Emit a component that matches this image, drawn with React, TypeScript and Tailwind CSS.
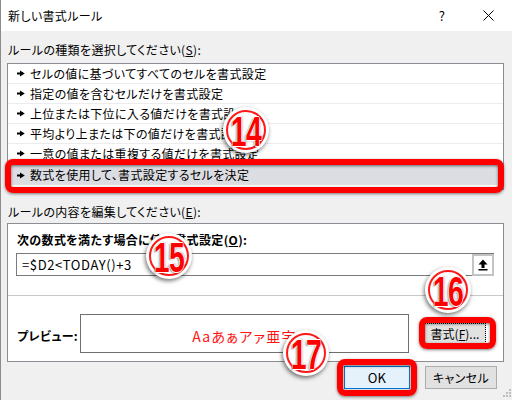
import React from "react";

const JP = { fontFamily: '"Noto Sans CJK JP", "Noto Sans", sans-serif', fontFeatureSettings: '"palt"' } as React.CSSProperties;

function Arrow() {
  return (
    <svg width="8" height="7" viewBox="0 0 8 7" className="shrink-0">
      <polygon points="0,2.6 3,2.6 3,0.5 7.8,3.5 3,6.5 3,4.4 0,4.4" fill="#000" />
    </svg>
  );
}

function Badge({ n, x, y }: { n: string; x: number; y: number }) {
  return (
    <div
      className="absolute w-[46px] h-[46px] rounded-full bg-white shadow-[-1px_2px_4px_rgba(0,0,0,0.55)] flex items-center justify-center"
      style={{ left: x - 23, top: y - 23 }}
    >
      <div className="w-[40px] h-[40px] rounded-full border-2 border-[#ff1a1a] flex items-center justify-center">
        <span
          className="block text-[43px] leading-[36px] font-bold text-[#ff0000] scale-x-[0.66] tracking-[-1px] mt-[2px]"
          style={{
            fontFamily: '"Liberation Sans", Arial, sans-serif',
            textShadow:
              "1px 0 0 #fff, -1px 0 0 #fff, 0 1px 0 #fff, 0 -1px 0 #fff, -2px 1px 2px rgba(0,0,0,0.45), 2px -1px 2px rgba(0,0,0,0.25)",
          }}
        >
          {n}
        </span>
      </div>
    </div>
  );
}

export default function App() {
  const rows = [
    "セルの値に基づいてすべてのセルを書式設定",
    "指定の値を含むセルだけを書式設定",
    "上位または下位に入る値だけを書式設定",
    "平均より上または下の値だけを書式設定",
    "一意の値または重複する値だけを書式設定",
    "数式を使用して、書式設定するセルを決定",
  ];
  return (
    <div
      className="relative w-[512px] h-[400px] overflow-hidden bg-[#f0f0f0] border-l border-[#8c8c8c] text-black text-[12px] leading-[16px] tracking-[0.35px]"
      style={JP}
    >
      {/* title bar */}
      <div className="h-[31px] bg-white flex items-center pl-[7px]">
        <span className="flex-1">新しい書式ルール</span>
        <span className="w-[8px] text-center text-[13px]">?</span>
        <svg width="11" height="11" viewBox="0 0 11 11" className="ml-[37px] mr-[18px]">
          <path d="M0.5 0.5 L10.5 10.5 M10.5 0.5 L0.5 10.5" stroke="#000" strokeWidth="1" />
        </svg>
      </div>

      <div className="pl-[6px]">
        <div className="mt-[11px] pl-[1px]">
          ルールの種類を選択してください(<span className="underline">S</span>):
        </div>
        <div className="mt-[5px] w-[497px] h-[127px] bg-white border border-[#8a8d94] pt-0">
          {rows.map((r, i) => (
            <div
              key={i}
              className={
                "h-[20px] flex items-center gap-[5px] pl-[9px] " +
                (i === 5 ? "bg-[#dcdde2] mt-[1px]" : "border-b border-[#ececec]")
              }
            >
              <Arrow />
              <span>{r}</span>
            </div>
          ))}
        </div>

        <div className="mt-[14px] pl-[1px]">
          ルールの内容を編集してください(<span className="underline">E</span>):
        </div>
        <div className="mt-[3px] w-[497px] h-[139px] bg-white border border-[#8a8d94]">
          <div className="pt-[8px] pl-[9px] font-bold">
            次の数式を満たす場合に値を書式設定(<span className="underline">O</span>):
          </div>
          <div className="mt-[5px] ml-[8px] w-[478px] h-[23px] border border-[#7a7a7a] flex items-center">
            <span
              className="flex-1 pl-[5px] text-[13px] tracking-[0.6px]"
              style={{ fontFamily: '"Noto Sans CJK JP", sans-serif' }}
            >
              =$D2&lt;TODAY()+3
            </span>
            <div className="w-[22px] h-[22px] border-2 border-[#c3c3c3] bg-white flex items-center justify-center -mr-[1px]">
              <svg width="10" height="12" viewBox="0 0 10 12">
                <polygon points="5,0.5 9.5,5.5 6.5,5.5 6.5,9 3.5,9 3.5,5.5 0.5,5.5" fill="#000" />
                <rect x="0.5" y="10" width="9" height="1.5" fill="#000" />
              </svg>
            </div>
          </div>
          <div className="mt-[19px] h-px bg-[#c8c8c8]" />
          <div className="mt-[18px] flex items-center">
            <span className="pl-[9px] w-[72px] font-bold pt-[4px]">プレビュー:</span>
            <div className="w-[329px] h-[39px] border border-[#6f6f6f] flex items-center justify-center">
              <span
                className="text-[14px] text-[#ff1414] tracking-[1.3px] pt-[4px]"
                style={{ fontFamily: '"Noto Sans CJK JP", sans-serif' }}
              >
                Aaあぁアァ亜宇
              </span>
            </div>
            <div className="ml-[15px] w-[62px] h-[21px] bg-[#e1e1e1] border border-dotted border-black flex items-center justify-center tracking-normal">
              書式(<span className="underline">F</span>)...
            </div>
          </div>
        </div>

        <div className="mt-[4px] flex justify-end pr-[15px] gap-[15px]">
          <div className="w-[66px] h-[23px] bg-[#e5f1fb] border border-[#0078d7] flex items-center justify-center text-[13px]">
            OK
          </div>
          <div className="w-[72px] h-[23px] bg-[#e1e1e1] border border-[#adadad] flex items-center justify-center">
            キャンセル
          </div>
        </div>
      </div>

      {/* resize grip */}
      <svg className="absolute left-[502px] top-[389px]" width="9" height="9" viewBox="0 0 9 9">
        <rect x="6" y="0" width="2" height="2" fill="#bdbdbd" />
        <rect x="3" y="3" width="2" height="2" fill="#bdbdbd" />
        <rect x="6" y="3" width="2" height="2" fill="#bdbdbd" />
        <rect x="0" y="6" width="2" height="2" fill="#bdbdbd" />
        <rect x="3" y="6" width="2" height="2" fill="#bdbdbd" />
        <rect x="6" y="6" width="2" height="2" fill="#bdbdbd" />
      </svg>

      {/* annotation frames */}
      <div className="absolute left-[4px] top-[159px] w-[499px] h-[34px] rounded-[8px] border-[6px] border-[#ff0000] shadow-[0_1px_3px_rgba(0,0,0,0.5),inset_0_1px_3px_rgba(0,0,0,0.55)]" />
      <div className="absolute left-[418px] top-[317px] w-[77px] h-[32px] rounded-[8px] border-[6px] border-[#ff0000] shadow-[0_1px_3px_rgba(0,0,0,0.5),inset_0_1px_3px_rgba(0,0,0,0.55)]" />
      <div className="absolute left-[336px] top-[359px] w-[80px] h-[37px] rounded-[8px] border-[6px] border-[#ff0000] shadow-[0_1px_3px_rgba(0,0,0,0.5),inset_0_1px_3px_rgba(0,0,0,0.55)]" />

      <Badge n="14" x={245} y={130} />
      <Badge n="15" x={168} y={256} />
      <Badge n="16" x={447} y={290} />
      <Badge n="17" x={305} y={353} />
    </div>
  );
}
